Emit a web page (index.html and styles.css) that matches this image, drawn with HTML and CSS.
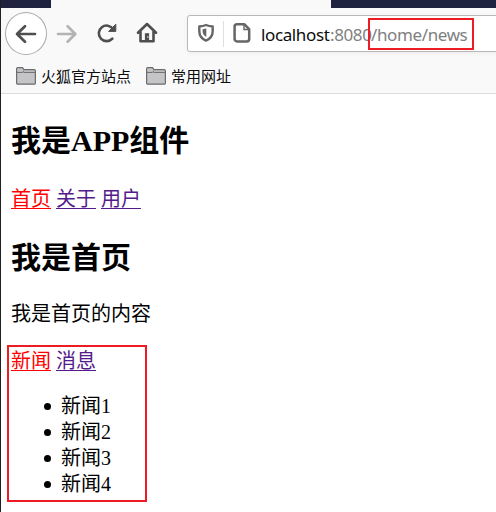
FILE: index.html
```
<!DOCTYPE html>
<html lang="zh-CN">
<head>
<meta charset="utf-8">
<title>home/news</title>
<link rel="stylesheet" href="styles.css">
</head>
<body>
<div class="window">
  <div class="tabstrip"><div class="tab"></div></div>
  <header class="chrome">
    <div class="toolbar">
      <button class="back" aria-label="后退">
        <svg width="42" height="42" viewBox="0 0 42 42"><path d="M30 21H12.5M20 13.2L12 21l8 7.8" fill="none" stroke="#4f4f51" stroke-width="2.7" stroke-linecap="round" stroke-linejoin="round"/></svg>
      </button>
      <svg class="forward" width="22" height="20" viewBox="0 0 22 20"><path d="M2 10h17M11.6 2.3L19.3 10l-7.7 7.7" fill="none" stroke="#b4b4b5" stroke-width="2.7" stroke-linecap="round" stroke-linejoin="round"/></svg>
      <svg class="reload" width="22" height="22" viewBox="0 0 22 22"><path d="M16.4 16.6A7.800 7.800 0 1 1 17.2 7.2" fill="none" stroke="#4f4f51" stroke-width="2.6" stroke-linecap="round"/><path d="M19.8 2.2v7.2h-7.2z" fill="#4f4f51" stroke="#4f4f51" stroke-linejoin="round"/></svg>
      <svg class="home" width="22" height="22" viewBox="0 0 22 22"><path d="M2 10.8L11 2l9 8.800M4.500 9.500v9.800h13V9.500" fill="none" stroke="#4f4f51" stroke-width="2.600" stroke-linecap="round" stroke-linejoin="round"/><path d="M8.900 19v-7.800h4.200V19z" fill="#4f4f51"/><path d="M11.400 14.300h1v1.500h-1z" fill="#fff"/></svg>
      <div class="urlbar">
        <svg class="shield" width="18" height="20" viewBox="0 0 18 20"><path d="M9 2C6.700 2.900 4.600 3.300 2.300 3.500V8c0 4.400 2.300 7.800 6.700 9.600 4.400-1.800 6.700-5.200 6.700-9.600V3.500C13.400 3.300 11.300 2.900 9 2z" fill="none" stroke="#666667" stroke-width="2.400" stroke-linejoin="round"/><path d="M9.300 5.500v8.600C6.700 12.600 5.600 10.500 5.600 8V6.300z" fill="#666667"/></svg>
        <span class="divider"></span>
        <svg class="page" width="20" height="22" viewBox="0 0 20 22"><path d="M5 2.200h7.200l5 5V17a2.400 2.400 0 0 1-2.400 2.400H5A2.400 2.400 0 0 1 2.600 17V4.600A2.400 2.400 0 0 1 5 2.200z" fill="none" stroke="#666667" stroke-width="2.500" stroke-linejoin="round"/><path d="M12 2.500v5h5" fill="none" stroke="#666667" stroke-width="1.400"/></svg>
        <span class="url"><b>localhost</b><span class="port">:8080</span><span class="path">/home/news</span></span>
      </div>
    </div>
    <nav class="bookmarks">
      <span class="bookmark"><svg width="20" height="18" viewBox="0 0 20 18"><path d="M.6 15.900V1.900Q.6.700 1.800.700H6.500L8 2.600H18q1.400 0 1.400 1.400V15.900q0 1.300-1.300 1.300H1.900Q.6 17.200.6 15.900z" fill="#c5c5c7" stroke="#6b6b6d" stroke-width="1.200"/><path d="M1 5.400H6.300L8 3.800" fill="none" stroke="#6b6b6d"/><path d="M7.500 5.400H19" stroke="#6b6b6d"/></svg>火狐官方站点</span>
      <span class="bookmark"><svg width="20" height="18" viewBox="0 0 20 18"><path d="M.6 15.900V1.900Q.6.700 1.800.700H6.500L8 2.600H18q1.400 0 1.400 1.400V15.900q0 1.300-1.300 1.300H1.900Q.6 17.200.6 15.900z" fill="#c5c5c7" stroke="#6b6b6d" stroke-width="1.200"/><path d="M1 5.400H6.300L8 3.800" fill="none" stroke="#6b6b6d"/><path d="M7.500 5.400H19" stroke="#6b6b6d"/></svg>常用网址</span>
    </nav>
  </header>
  <main class="content">
    <h2>我是APP组件</h2>
    <div class="links"><a class="active">首页</a> <a>关于</a> <a>用户</a></div>
    <h2>我是首页</h2>
    <p>我是首页的内容</p>
    <section class="news">
      <div class="links"><a class="active">新闻</a> <a>消息</a></div>
      <ul><li>新闻1</li><li>新闻2</li><li>新闻3</li><li>新闻4</li></ul>
    </section>
  </main>
</div>
</body>
</html>
```
FILE: styles.css
```
* { box-sizing: border-box; }
body { margin: 0; background: #fff; overflow: hidden; }
.window { height: 512px; border-left: 1px solid #202023; }
.tabstrip { height: 8px; background: #202340; padding-left: 50px; }
.tab { width: 280px; height: 8px; background: #f9f9fa; }
.chrome { height: 86px; background: #f9f9fa; border-bottom: 1px solid #dcdcdd; overflow: hidden; }
.toolbar { display: flex; align-items: center; height: 51px; padding-left: 4px; }
.toolbar svg { display: block; flex: none; }
.back { flex: none; width: 42px; height: 43px; padding: 0; border: 1px solid #aaaaab; border-radius: 50%; background: #fff; }
.back svg { margin: -1px; }
.forward { margin-left: 9px; }
.reload { margin: -1px 0 0 18px; }
.home { margin: -1px 0 0 18px; }
.urlbar { display: flex; align-items: center; flex: none; width: 330px; height: 37px; margin-left: 29px; padding-left: 9px; border: 1px solid #b9b9ba; border-radius: 3px; background: #fff; box-shadow: 0 1px 4px rgba(0, 0, 0, .06); }
.shield { margin-top: -2px; }
.divider { width: 1px; height: 26px; margin-left: 8px; background: #dfdfe0; }
.page { margin: -1px 0 0 8px; }
.url { display: flex; align-items: center; margin-left: 9px; font: 17px/34px "Noto Sans", sans-serif; letter-spacing: -.38px; color: #808081; white-space: nowrap; }
.url b { width: 69px; font-weight: 400; color: #0c0c0d; }
.port { width: 38px; }
.path { width: 106px; height: 32px; line-height: 30px; padding-left: 1px; border: 2px solid #ed1c24; }
.url b, .port { padding-top: 2px; line-height: 32px; }
.bookmarks { display: flex; gap: 15px; padding: 7px 0 0 15px; font: 15px/20px "Noto Sans CJK SC", sans-serif; color: #0c0c0d; }
.bookmark { display: flex; align-items: center; gap: 5px; }
.content { padding: 25px 0 0 10px; font: 20px/26px "Liberation Serif", "Noto Sans CJK SC", serif; color: #000; }
h2 { margin: 0; font-size: 30px; line-height: 44px; font-weight: 700; }
.links { height: 26px; }
h2 + .links { margin: 23px 0 24px; }
a { color: #551a8b; text-decoration: underline; text-decoration-thickness: 1px; text-underline-offset: 2px; }
a.active { color: #f00; }
p { margin: 21px 0 0; }
.news { width: 140px; height: 157px; margin: 18px 0 0 -4px; border: 2px solid #ed1c24; padding: 1px 0 0 2px; }
ul { margin: 19px 0 0; padding-left: 50px; list-style: none; }
li { display: flex; height: 26px; }
li::before { content: ""; width: 7px; height: 7px; margin: 10px 10px 0 -17px; border-radius: 50%; background: #000; }
```
